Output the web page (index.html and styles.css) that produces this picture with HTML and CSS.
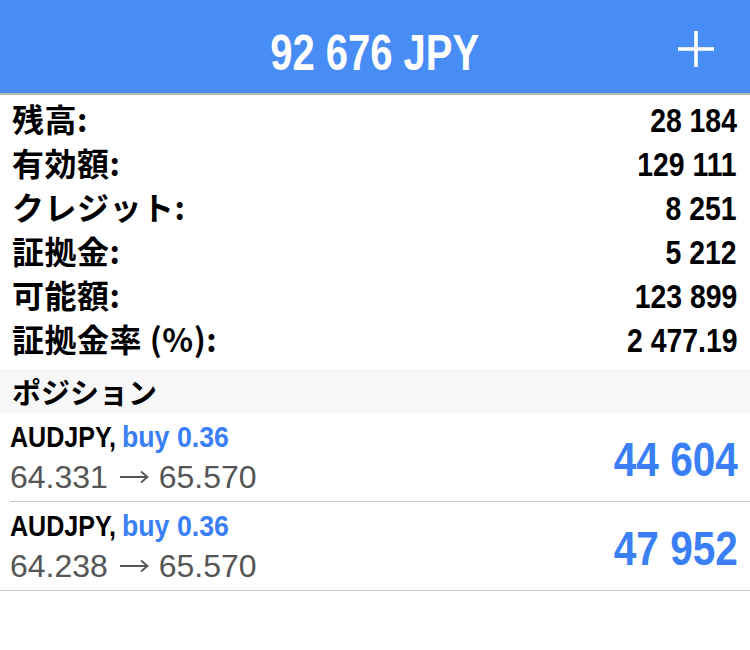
FILE: index.html
```html
<!DOCTYPE html>
<html lang="ja">
<head>
<meta charset="utf-8">
<title>口座</title>
<link rel="stylesheet" href="styles.css">
</head>
<body>
<header class="header">
  <div class="header-side"></div>
  <h1 class="title">92 676 JPY</h1>
  <div class="header-side header-right">
    <svg class="plus" width="36" height="36" viewBox="0 0 36 36" aria-label="追加">
      <rect x="16.2" y="0" width="3.6" height="36" fill="#fff"/>
      <rect x="0" y="16.2" width="36" height="3.6" fill="#fff"/>
    </svg>
  </div>
</header>

<section class="summary">
  <div class="row"><span class="label">残高:</span><span class="value">28 184</span></div>
  <div class="row"><span class="label">有効額:</span><span class="value">129 111</span></div>
  <div class="row"><span class="label">クレジット:</span><span class="value">8 251</span></div>
  <div class="row"><span class="label">証拠金:</span><span class="value">5 212</span></div>
  <div class="row"><span class="label">可能額:</span><span class="value">123 899</span></div>
  <div class="row"><span class="label">証拠金率 (%):</span><span class="value">2 477.19</span></div>
</section>

<div class="section-title">ポジション</div>

<section class="positions">
  <div class="pos">
    <div class="pos-info">
      <div class="sym"><span class="pair">AUDJPY,</span> <span class="side">buy 0.36</span></div>
      <div class="prices">64.331 <svg class="arrow" width="30" height="14" viewBox="0 0 30 14" aria-label="→"><path d="M1 7H28.5M22 1.5L28.5 7L22 12.5" fill="none" stroke="#555" stroke-width="1.8"/></svg> 65.570</div>
    </div>
    <div class="profit"><span class="profit-num">44 604</span></div>
  </div>
  <div class="pos pos-last">
    <div class="pos-info">
      <div class="sym"><span class="pair">AUDJPY,</span> <span class="side">buy 0.36</span></div>
      <div class="prices">64.238 <svg class="arrow" width="30" height="14" viewBox="0 0 30 14" aria-label="→"><path d="M1 7H28.5M22 1.5L28.5 7L22 12.5" fill="none" stroke="#555" stroke-width="1.8"/></svg> 65.570</div>
    </div>
    <div class="profit"><span class="profit-num">47 952</span></div>
  </div>
</section>
</body>
</html>
```

FILE: styles.css
```css
* { box-sizing: border-box; }

html, body {
  margin: 0;
  padding: 0;
  background: #ffffff;
}

body {
  width: 750px;
  font-family: "Liberation Sans", Arial, sans-serif;
  color: #000;
}

.header {
  height: 95px;
  background: #488cf6;
  border-bottom: 2px solid #b8b8b8;
  display: grid;
  grid-template-columns: 1fr auto 1fr;
  align-items: center;
}

.title {
  margin: 0;
  padding-top: 12px;
  font-size: 50px;
  line-height: 50px;
  font-weight: 700;
  color: #fff;
  transform: scaleX(0.8);
  transform-origin: center;
  white-space: nowrap;
}

.header-right {
  display: flex;
  justify-content: flex-end;
  padding-right: 36px;
  padding-top: 4px;
}

.plus { display: block; }

.summary {
  padding-top: 1px;
}

.row {
  height: 44px;
  display: flex;
  align-items: baseline;
  justify-content: space-between;
  padding: 0 13px 0 12px;
}

.label {
  font-family: "Noto Sans CJK JP", "Liberation Sans", sans-serif;
  font-weight: 700;
  font-size: 32px;
  line-height: 44px;
  letter-spacing: 0.5px;
}

.value {
  display: inline-block;
  font-weight: 700;
  font-size: 33px;
  line-height: 44px;
  transform: scaleX(0.86);
  transform-origin: right center;
  white-space: nowrap;
}

.section-title {
  margin-top: 9px;
  height: 44px;
  background: #f7f7f7;
  padding-left: 12px;
  font-family: "Noto Sans CJK JP", "Liberation Sans", sans-serif;
  font-weight: 700;
  font-size: 29px;
  line-height: 44px;
}

.pos {
  height: 89px;
  margin-left: 10px;
  border-bottom: 1px solid #c8c8c8;
  display: flex;
  justify-content: space-between;
  align-items: center;
  padding-right: 12px;
}

.pos-last {
  margin-left: 0;
  padding-left: 10px;
}

.pos-info {
  align-self: flex-start;
  padding-top: 4px;
}

.sym {
  font-weight: 700;
  font-size: 30px;
  line-height: 40px;
  white-space: nowrap;
}

.pair {
  display: inline-block;
  transform: scaleX(0.836);
  transform-origin: left center;
  margin-right: -23px;
}

.side {
  display: inline-block;
  color: #3a7ff5;
  transform: scaleX(0.89);
  transform-origin: left center;
}

.prices {
  font-size: 32px;
  line-height: 40px;
  color: #555555;
  white-space: nowrap;
}

.arrow {
  vertical-align: 4px;
  margin: 0 1px 0 2px;
}

.profit {
  padding-top: 6px;
}

.profit-num {
  display: inline-block;
  font-weight: 700;
  font-size: 48px;
  line-height: 48px;
  color: #3a7ff5;
  transform: scaleX(0.845);
  transform-origin: right center;
  white-space: nowrap;
}
```
